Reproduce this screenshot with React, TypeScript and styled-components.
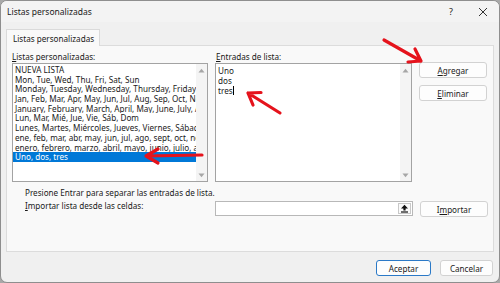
import React from "react";
import styled, { createGlobalStyle } from "styled-components";

const GlobalStyle = createGlobalStyle`
  html, body {
    margin: 0;
    padding: 0;
    width: 500px;
    height: 283px;
    overflow: hidden;
    background: #a8a8a8;
  }
  body {
    font-family: "Noto Sans", "Segoe UI", sans-serif;
    font-size: 8.15px;
    color: #1a1a1a;
  }
  * { box-sizing: border-box; }
`;

const Dialog = styled.div`
  position: relative;
  width: 500px;
  height: 283px;
  border: 1px solid #8e8e8e;
  border-radius: 7px;
  background: #f0f0f0;
  display: flex;
  flex-direction: column;
  overflow: hidden;
`;

const TitleBar = styled.div`
  height: 21px;
  flex: 0 0 21px;
  display: flex;
  align-items: center;
  padding-left: 6px;
  background: #f3f3f3;
`;

const TitleText = styled.div`
  flex: 1;
  font-size: 8.5px;
  color: #1a1a1a;
`;

const TitleButton = styled.div`
  width: 32px;
  height: 21px;
  display: flex;
  align-items: center;
  justify-content: center;
  font-size: 9px;
  color: #222;
`;

const Body = styled.div`
  display: flex;
  flex-direction: column;
  padding: 7px 5px 0 5px;
`;

const TabStrip = styled.div`
  display: flex;
  height: 16px;
`;

const Tab = styled.div`
  width: 94px;
  height: 17px;
  padding-left: 6px;
  display: flex;
  align-items: center;
  background: #f9f9f9;
  border: 1px solid #dadada;
  border-bottom: none;
  position: relative;
  z-index: 1;
`;

const Panel = styled.div`
  height: 207px;
  width: 488px;
  background: #f9f9f9;
  border: 1px solid #dcdcdc;
  padding: 6px 0 0 5px;
  display: flex;
  flex-direction: column;
`;

const TopGrid = styled.div`
  display: grid;
  grid-template-columns: 196px 197px 68px;
  grid-template-rows: 11px 119px;
  column-gap: 7px;
  & > :nth-child(2) { margin-left: 1px; }
`;

const Label = styled.div`
  line-height: 10px;
  white-space: nowrap;
`;

const Box = styled.div`
  display: flex;
  border: 1px solid #a3a3a3;
  background: #ffffff;
  overflow: hidden;
`;

const ListArea = styled.div`
  flex: 1;
  min-width: 0;
  padding-top: 1px;
  overflow: hidden;
`;

const ListItem = styled.div<{ $selected?: boolean }>`
  height: 9.7px;
  line-height: 9.7px;
  padding-left: 2px;
  white-space: nowrap;
  overflow: hidden;
  background: ${(p) => (p.$selected ? "#0078d7" : "transparent")};
  color: ${(p) => (p.$selected ? "#ffffff" : "#1a1a1a")};
`;

const TextArea = styled.div`
  flex: 1;
  padding: 2px 0 0 2px;
  line-height: 10px;
`;

const Caret = styled.span`
  display: inline-block;
  width: 1px;
  height: 9px;
  background: #000;
  vertical-align: -1px;
`;

const ScrollBar = styled.div`
  width: 11px;
  flex: 0 0 11px;
  background: #f4f4f4;
  display: flex;
  flex-direction: column;
  justify-content: space-between;
  align-items: center;
  padding: 4px 0 3px;
`;

const ButtonColumn = styled.div`
  display: flex;
  flex-direction: column;
  gap: 7px;
  margin-top: -1px;
`;

const Button = styled.div<{ $width?: number; $primary?: boolean }>`
  width: ${(p) => (p.$width ? `${p.$width}px` : "100%")};
  height: 16px;
  display: flex;
  align-items: center;
  justify-content: center;
  background: #fdfdfd;
  border: 1px solid ${(p) => (p.$primary ? "#2b79c7" : "#d2d2d2")};
  border-radius: 3px;
  color: #1a1a1a;
  white-space: nowrap;
`;

const BottomGrid = styled.div`
  display: grid;
  grid-template-columns: 196px 198px 68px;
  column-gap: 7px;
  row-gap: 3px;
  margin-top: 6px;
`;

const Hint = styled.div`
  grid-column: 1 / 3;
  padding-left: 13px;
  line-height: 10px;
  white-space: nowrap;
`;

const ImportLabel = styled.div`
  padding-left: 13px;
  line-height: 10px;
  white-space: nowrap;
`;

const Input = styled.div`
  height: 15px;
  border: 1px solid #b8b8b8;
  background: #fff;
  display: flex;
  justify-content: flex-end;
  align-items: center;
  padding-right: 1px;
`;

const IconBox = styled.div`
  width: 13px;
  height: 11px;
  border: 1px solid #c8c8c8;
  background: #fafafa;
  display: flex;
  align-items: center;
  justify-content: center;
`;

const Footer = styled.div`
  flex: 1;
  display: flex;
  justify-content: flex-end;
  gap: 9px;
  padding: 8px 6px 0 0;
`;

const Overlay = styled.svg`
  position: absolute;
  left: -1px;
  top: -1px;
  pointer-events: none;
`;

const Up = () => (
  <svg width="7" height="5" viewBox="0 0 7 5">
    <path d="M0.5 4.5 L3.5 0.8 L6.5 4.5 Z" fill="#a6a6a6" />
  </svg>
);
const Down = () => (
  <svg width="7" height="5" viewBox="0 0 7 5">
    <path d="M0.5 0.5 L3.5 4.2 L6.5 0.5 Z" fill="#a6a6a6" />
  </svg>
);

const lists = [
  "NUEVA LISTA",
  "Mon, Tue, Wed, Thu, Fri, Sat, Sun",
  "Monday, Tuesday, Wednesday, Thursday, Friday, Saturday, Sunday",
  "Jan, Feb, Mar, Apr, May, Jun, Jul, Aug, Sep, Oct, Nov, Dec",
  "January, February, March, April, May, June, July, August",
  "Lun, Mar, Mié, Jue, Vie, Sáb, Dom",
  "Lunes, Martes, Miércoles, Jueves, Viernes, Sábado, Domingo",
  "ene, feb, mar, abr, may, jun, jul, ago, sept, oct, nov, dic",
  "enero, febrero, marzo, abril, mayo, junio, julio, agosto",
  "Uno, dos, tres",
];

export default function App() {
  return (
    <>
      <GlobalStyle />
      <Dialog>
        <TitleBar>
          <TitleText>Listas personalizadas</TitleText>
          <TitleButton>?</TitleButton>
          <TitleButton>
            <svg width="10" height="10" viewBox="0 0 10 10">
              <path d="M1 1 L9 9 M9 1 L1 9" stroke="#333" strokeWidth="1" />
            </svg>
          </TitleButton>
        </TitleBar>
        <Body>
          <TabStrip>
            <Tab>Listas personalizadas</Tab>
          </TabStrip>
          <Panel>
            <TopGrid>
              <Label>
                <u>L</u>istas personalizadas:
              </Label>
              <Label>
                <u>E</u>ntradas de lista:
              </Label>
              <div />
              <Box>
                <ListArea>
                  {lists.map((l, i) => (
                    <ListItem key={i} $selected={i === lists.length - 1}>
                      {l}
                    </ListItem>
                  ))}
                </ListArea>
                <ScrollBar>
                  <Up />
                  <Down />
                </ScrollBar>
              </Box>
              <Box>
                <TextArea>
                  Uno
                  <br />
                  dos
                  <br />
                  tres
                  <Caret />
                </TextArea>
                <ScrollBar>
                  <Up />
                  <Down />
                </ScrollBar>
              </Box>
              <ButtonColumn>
                <Button>
                  <u>A</u>gregar
                </Button>
                <Button>
                  <u>E</u>liminar
                </Button>
              </ButtonColumn>
            </TopGrid>
            <BottomGrid>
              <Hint>Presione Entrar para separar las entradas de lista.</Hint>
              <div />
              <ImportLabel>
                <u>I</u>mportar lista desde las celdas:
              </ImportLabel>
              <Input>
                <IconBox>
                  <svg width="9" height="9" viewBox="0 0 9 9">
                    <path d="M4.5 0.8 L8 4.5 L5.6 4.5 L5.6 6.5 L3.4 6.5 L3.4 4.5 L1 4.5 Z" fill="#111" />
                    <rect x="1" y="7.4" width="7" height="1.2" fill="#111" />
                  </svg>
                </IconBox>
              </Input>
              <Button>
                I<u>m</u>portar
              </Button>
            </BottomGrid>
          </Panel>
        </Body>
        <Footer>
          <Button $width={55} $primary>
            Aceptar
          </Button>
          <Button $width={53}>Cancelar</Button>
        </Footer>
        <Overlay width="500" height="283" viewBox="0 0 500 283">
          <g stroke="#e5131c" strokeWidth="3.2" strokeLinecap="round" strokeLinejoin="round" fill="none">
            <path d="M384 40 L421 61 M415 49 L421 61 L408 62" />
            <path d="M280 113 L248 93 M253 105 L248 93 L261 92.5" />
            <path d="M202 155 L146 156 M158 149 L146 156 L158 163" />
          </g>
        </Overlay>
      </Dialog>
    </>
  );
}
